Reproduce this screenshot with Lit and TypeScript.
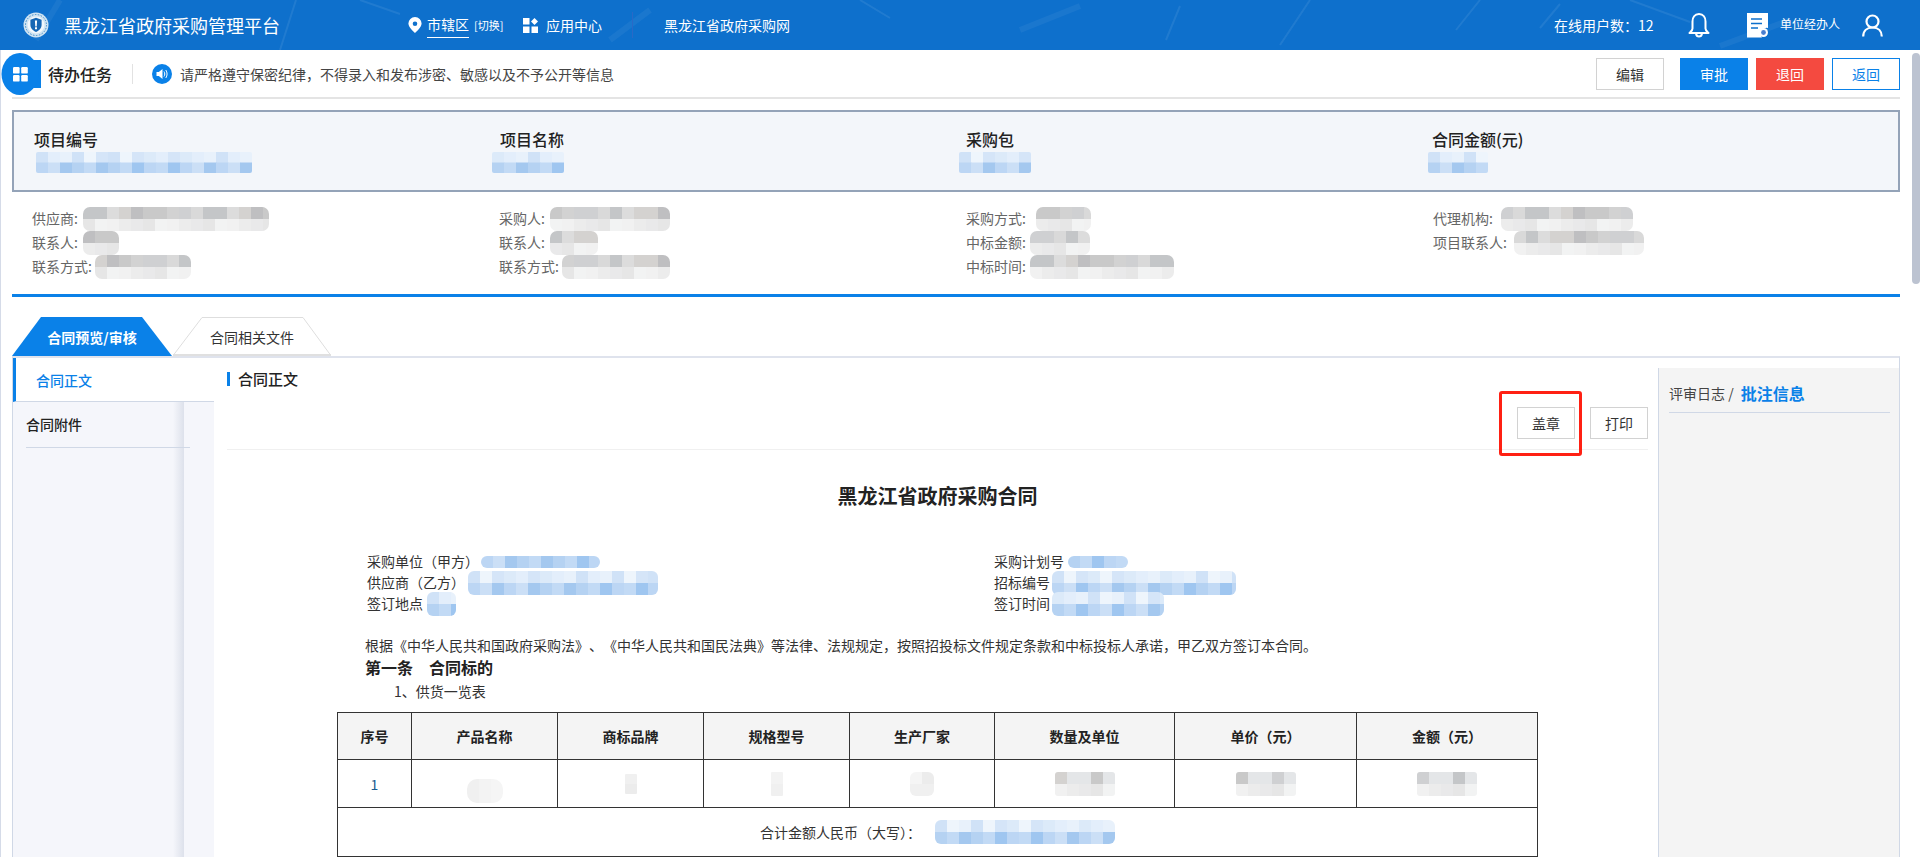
import { LitElement, html, css, svg } from "lit";
import { customElement } from "lit/decorators.js";

const GREY_D = ["#c9c9c9", "#d2d2d2", "#cfd0d2", "#d9d9d9", "#c4c6c8", "#dcdcdc", "#d4d2d0", "#bfbfc1"];
const GREY_L = ["#ececec", "#efefef", "#e6e6e6", "#f1f1f1", "#f4f4f4", "#e9e9ea", "#f2f3f3"];
const BLUE_D = ["#a4c8ef", "#b5d2f2", "#c2daf5", "#9fc6f0", "#bcd6f4", "#cbdff6"];
const BLUE_L = ["#d5e5f8", "#dceaf9", "#e3eefb", "#e8f1fb", "#d0e2f7", "#eef5fc"];
const FAINT = ["#ececec", "#f0f0f0", "#f3f3f3", "#f5f5f5"];

let seedCounter = 7;
const pick = (list: string[], n: number) => list[(n * 7 + (n % 5) * 3) % list.length];

/** Mosaic redaction patch: 12px cells, one row per 12px of height. */
function patch(w: number, h: number, rows: string[][], ml = 4, r = 5) {
  const cols = Math.ceil(w / 12);
  const rects = [];
  for (let y = 0; y < rows.length; y++) {
    for (let x = 0; x < cols; x++) {
      seedCounter += 3;
      rects.push(svg`<rect x=${x * 12} y=${y * (h / rows.length)} width="12.5" height=${h / rows.length + 0.5} fill=${pick(rows[y], seedCounter + x)} />`);
    }
  }
  return html`<svg class="patch" width=${w} height=${h} viewBox="0 0 ${w} ${h}" style="margin-left:${ml}px;border-radius:${r}px">${rects}</svg>`;
}
const grey = (w: number, ml = 4) => patch(w, 24, [GREY_D, GREY_L], ml, 7);
const blueHead = (w: number, ml = 0) => patch(w, 21, [BLUE_L, BLUE_D], ml, 2);
const blueDoc = (w: number, h: number, ml = 2) => patch(w, h, h > 12 ? [BLUE_L, BLUE_D] : [BLUE_D], ml, 6);
const cellPatch = (w: number, h: number) => patch(w, h, h > 12 ? [GREY_D.map((c, i) => (i % 2 ? "#e4e6e8" : c)), GREY_L] : [FAINT], 0, 3);

@customElement("app-root")
export class AppRoot extends LitElement {
  static styles = css`
    :host {
      display: block;
      width: 1920px;
      height: 857px;
      overflow: hidden;
      position: relative;
      background: #fff;
      color: #333;
      font-family: "Noto Sans CJK SC", "Liberation Sans", sans-serif;
      font-size: 14px;
    }
    * { box-sizing: border-box; }
    .patch { display: block; flex: none; overflow: hidden; }

    /* header */
    .header {
      position: relative;
      height: 50px;
      background: #0e70cc;
      color: #fff;
      display: flex;
      align-items: center;
      overflow: hidden;
    }
    .streaks { position: absolute; inset: 0; pointer-events: none; }
    .header > *:not(.streaks) { position: relative; flex: none; }
    .logo { margin-left: 23px; }
    .brand { margin-left: 15px; font-size: 18px; width: 216px; white-space: nowrap; }
    .pin { margin-left: 128px; }
    .region { margin-left: 5px; width: 42px; height: 24px; line-height: 20px; border-bottom: 1px solid #fff; margin-top: 1px; white-space: nowrap; }
    .switch { margin-left: 5px; font-size: 11px; width: 42px; white-space: nowrap; }
    .gridico { margin-left: 7px; }
    .apps { margin-left: 8px; width: 56px; white-space: nowrap; }
    .vsep { margin-left: 30px; width: 1px; height: 26px; background: #2a69c6; }
    .site { margin-left: 31px; width: 126px; white-space: nowrap; }
    .online { margin-left: 764px; width: 120px; white-space: nowrap; }
    .bell { margin-left: 14px; }
    .docico { margin-left: 37px; }
    .role { margin-left: 11px; font-size: 12px; width: 61px; white-space: nowrap; margin-top: -4px; }
    .user { margin-left: 21px; }

    /* page */
    .page { padding: 0 20px 0 12px; }
    .edge { position: absolute; left: 0; top: 50px; bottom: 0; width: 1px; background: #d5dbe8; }
    .scroll { position: absolute; right: 0; top: 53px; width: 8px; height: 231px; border-radius: 4px; background: #bcc3d1; }

    .toolbar {
      height: 49px;
      border-bottom: 2px solid #e4e4e4;
      display: flex;
      align-items: center;
    }
    .badge { margin-left: -11px; flex: none; }
    .tb-title { margin-left: 7px; font-size: 16px; font-weight: 500; color: #222; width: 64px; white-space: nowrap; }
    .tb-sep { margin-left: 20px; width: 1px; height: 20px; background: #e2e2e2; }
    .sound { margin-left: 19px; flex: none; }
    .notice { margin-left: 8px; color: #444; white-space: nowrap; }
    .tb-actions { margin-left: auto; display: flex; }
    .btn {
      width: 68px;
      height: 32px;
      display: grid;
      place-items: center;
      font-size: 14px;
      background: #fff;
      border: 1px solid #d2d2d2;
      color: #333;
    }
    .btn.primary { background: #0a81e8; border-color: #0a81e8; color: #fff; margin-left: 16px; }
    .btn.danger { background: #f44a40; border-color: #f44a40; color: #fff; margin-left: 8px; }
    .btn.outline { border-color: #0a81e8; color: #0a81e8; margin-left: 8px; }

    .summary {
      margin-top: 11px;
      height: 82px;
      border: 2px solid #94a3b8;
      background: #f3f6fa;
      padding: 15px 0 0 20px;
      display: grid;
      grid-template-columns: repeat(4, 466px);
    }
    .sum-label { font-size: 16px; font-weight: 500; line-height: 25px; color: #222; white-space: nowrap; }

    .info {
      margin-top: 14px;
      padding-left: 20px;
      display: grid;
      grid-template-columns: repeat(4, 467px);
    }
    .info-row { height: 24px; display: flex; align-items: center; color: #666; white-space: nowrap; }
    .info-row .patch { margin-top: 2px; }
    .rule { margin-top: 16px; height: 3px; background: #0a81e8; }

    .tabs { margin-top: 20px; height: 39px; display: flex; gap: 1px; }
    .tab { position: relative; height: 39px; display: grid; place-items: center; white-space: nowrap; }
    .tab svg { position: absolute; inset: 0; }
    .tab span { position: relative; }
    .tab.on { width: 160px; color: #fff; font-weight: 700; }
    .tab.off { width: 158px; color: #333; }

    .frame {
      height: 501px;
      overflow: hidden;
      border-top: 2px solid #dfe3ed;
      border-left: 1px solid #d0d8e6;
      border-right: 1px solid #d0d8e6;
      display: flex;
    }

    .side { width: 201px; flex: none; background: #f5f6fb; }
    .side-on {
      height: 44px;
      background: #fff;
      border-left: 3px solid #0a81e8;
      border-bottom: 1px solid #d0d8e6;
      padding-left: 20px;
      line-height: 45px;
      color: #0a81e8;
      font-weight: 500;
    }
    .side-rest {
      height: 100%;
      margin-right: 30px;
      background: linear-gradient(to right, transparent 160px, #dde1eb);
      padding-left: 13px;
    }
    .side-item { height: 46px; width: 164px; border-bottom: 1px solid #d0d8e6; line-height: 44px; font-weight: 500; color: #222; }

    .main { width: 1444px; flex: none; padding: 14px 10px 0 13px; overflow: hidden; }
    .main-title { height: 14px; line-height: 13px; font-size: 15px; border-left: 3px solid #0a81e8; padding-left: 8px; font-weight: 500; color: #222; }
    .actions { margin-top: 21px; padding-bottom: 10px; border-bottom: 1px solid #f0f0f0; display: flex; justify-content: flex-end; gap: 15px; }
    .stamp { position: relative; width: 58px; }
    .stamp::after {
      content: "";
      position: absolute;
      left: -19px;
      right: -8px;
      top: -17px;
      bottom: -18px;
      border: 3px solid #ff2013;
      border-radius: 3px;
    }
    .print { width: 58px; }

    .doc-title { margin-top: 31px; height: 30px; line-height: 30px; font-size: 20px; font-weight: 700; color: #222; text-align: center; }
    .doc-info { margin-top: 39px; margin-left: 140px; display: grid; grid-template-columns: 627px 1fr; }
    .doc-row { height: 21px; display: flex; align-items: center; white-space: nowrap; color: #333; }
    .doc-row .patch { margin-top: 2px; }
    .para { margin: 22px 0 0 138px; line-height: 21px; color: #333; white-space: nowrap; text-spacing-trim: space-all; }
    .h-clause { margin-left: 138px; height: 24px; line-height: 22px; font-size: 16px; font-weight: 700; color: #222; white-space: nowrap; }
    .list { margin: 1px 0 0 167px; line-height: 21px; color: #333; }

    table { margin: 10px 0 0 110px; width: 1200px; table-layout: fixed; border-collapse: collapse; border: 1px solid #333; }
    th, td { border: 1px solid #333; text-align: center; padding: 0; font-weight: normal; }
    th { height: 47px; background: #f4f4f4; font-weight: 700; color: #222; }
    td { height: 48px; }
    td > .patch { margin: 0 auto !important; }
    td.low { padding-top: 14px; }
    .seq { color: #1b5c8f; }
    .total { height: 49px; }
    .total-in { display: flex; align-items: center; justify-content: center; white-space: nowrap; color: #333; }

    .aside { flex: 1; min-width: 0; margin-top: 10px; background: #f4f4f4; border-left: 1px solid #d0d8e6; padding: 0 9px 0 10px; }
    .aside-head { height: 45px; padding-top: 5px; border-bottom: 1px solid #d0d8e6; display: flex; align-items: center; gap: 5px; white-space: nowrap; color: #444; }
    .aside-head b { margin-left: 2px; font-size: 16px; font-weight: 700; color: #0a81e8; }
  `;

  render() {
    return html`
      <div class="header">
        <svg class="streaks" width="1920" height="50" viewBox="0 0 1920 50" fill="none" stroke="#fff" stroke-opacity=".08">
          <path d="M360 0l40 14M296 0l-16 50M1310 0l-30 45M1480 0l-24 30M1560 4l-20 24M1630 0l60 22M1180 6l-14 34M860 0l30 18" stroke-width="2" />
          <path d="M60 0l-24 40M610 40l40-30M1020 30l60-24M1720 46l70-26" stroke-opacity=".05" stroke-width="6" />
        </svg>
        <svg class="logo" width="26" height="26" viewBox="0 0 26 26">
          <circle cx="13" cy="13" r="12.500" fill="#cfe3f2" />
          <circle cx="13" cy="13" r="10.500" fill="none" stroke="#3d8cc9" stroke-width="1" stroke-dasharray="1.500 1.500" />
          <circle cx="13" cy="13" r="8.500" fill="#f2f8fc" />
          <path d="M13 5.800l5.600 2v5c0 3.600-2.600 5.800-5.600 7.200-3-1.400-5.600-3.600-5.600-7.200v-5z" fill="#1566b4" />
          <path d="M11.900 8.400h2.200l-.4 6h-1.400zM12 15.200h2v2h-2z" fill="#fff" />
        </svg>
        <div class="brand">黑龙江省政府采购管理平台</div>
        <svg class="pin" width="14" height="16" viewBox="0 0 14 16">
          <path fill-rule="evenodd" fill="#fff" d="M7 0a6.600 6.600 0 0 1 6.600 6.600C13.600 10.800 7 16 7 16S.4 10.800.4 6.600A6.600 6.600 0 0 1 7 0zm0 4.400a2.300 2.300 0 1 0 0 4.600 2.300 2.300 0 0 0 0-4.600z" />
        </svg>
        <div class="region">市辖区</div>
        <div class="switch">[切换]</div>
        <svg class="gridico" width="15" height="15" viewBox="0 0 15 15" fill="#fff">
          <rect x="0" y="0" width="6.500" height="6.500" />
          <rect x="0" y="8.500" width="6.500" height="6.500" />
          <rect x="8.500" y="8.500" width="6.500" height="6.500" />
          <path d="M11.500 0l3.500 3.500-3.500 3.500L8 3.500z" />
        </svg>
        <div class="apps">应用中心</div>
        <div class="vsep"></div>
        <div class="site">黑龙江省政府采购网</div>
        <div class="online">在线用户数\uFF1A12</div>
        <svg class="bell" width="22" height="26" viewBox="0 0 22 26" fill="none" stroke="#fff" stroke-width="2" stroke-linejoin="round">
          <path d="M11 2C6.500 2 4.500 5.500 4.500 9.500v7c0 2-1.500 3-3 4.500h19c-1.500-1.500-3-2.500-3-4.500v-7C17.500 5.500 15.500 2 11 2z" />
          <path d="M8 21.500c.3 1.800 1.400 3 3 3s2.700-1.200 3-3" />
        </svg>
        <svg class="docico" width="22" height="25" viewBox="0 0 22 25">
          <path d="M0 0h21v15a6 6 0 0 0-6 9.500H0z" fill="#fff" />
          <path d="M4 6h11M4 10.500h11M4 15h7" stroke="#0e70cc" stroke-width="1.600" />
          <circle cx="16.500" cy="19.500" r="4.500" fill="#fff" />
          <circle cx="16.500" cy="19.500" r="2.400" fill="#4a7fd0" />
        </svg>
        <div class="role">单位经办人</div>
        <svg class="user" width="21" height="23" viewBox="0 0 21 23" fill="none" stroke="#fff" stroke-width="2.200">
          <circle cx="10.500" cy="7.500" r="6" />
          <path d="M1.200 22.500c0-5.500 3.500-9 9.300-9s9.300 3.500 9.300 9" />
        </svg>
      </div>

      <div class="edge"></div>
      <div class="scroll"></div>

      <div class="page">
        <div class="toolbar">
          <svg class="badge" width="40" height="42" viewBox="0 0 40 42">
            <rect x="20" y="7" width="20" height="28" fill="#0a81e8" />
            <ellipse cx="19" cy="21" rx="18.500" ry="21" fill="#0a81e8" />
            <rect x="12" y="14" width="6.600" height="6.600" rx="1.200" fill="#fff" />
            <rect x="20.200" y="14" width="6.600" height="6.600" rx="1.200" fill="#fff" />
            <rect x="12" y="22" width="6.600" height="6.600" rx="1.200" fill="#fff" />
            <rect x="20.200" y="22" width="6.600" height="6.600" rx="1.200" fill="#fff" />
          </svg>
          <div class="tb-title">待办任务</div>
          <div class="tb-sep"></div>
          <svg class="sound" width="20" height="20" viewBox="0 0 20 20">
            <circle cx="10" cy="10" r="10" fill="#0a81e8" />
            <path d="M4.500 8h2.300l3.700-3v10l-3.700-3H4.500z" fill="#fff" />
            <path d="M12 7.500c1 1.500 1 3.500 0 5M13.800 6c1.700 2.500 1.700 5.500 0 8" fill="none" stroke="#fff" stroke-width="1" />
          </svg>
          <div class="notice">请严格遵守保密纪律\uFF0C不得录入和发布涉密、敏感以及不予公开等信息</div>
          <div class="tb-actions">
            <div class="btn">编辑</div>
            <div class="btn primary">审批</div>
            <div class="btn danger">退回</div>
            <div class="btn outline">返回</div>
          </div>
        </div>

        <div class="summary">
          <div><div class="sum-label">项目编号</div>${blueHead(216, 2)}</div>
          <div><div class="sum-label">项目名称</div>${blueHead(72, -8)}</div>
          <div><div class="sum-label">采购包</div>${blueHead(72, -7)}</div>
          <div><div class="sum-label">合同金额(元)</div>${blueHead(60, -4)}</div>
        </div>

        <div class="info">
          <div>
            <div class="info-row">供应商:${grey(186, 5)}</div>
            <div class="info-row">联系人:${grey(36, 5)}</div>
            <div class="info-row">联系方式:${grey(96, 3)}</div>
          </div>
          <div>
            <div class="info-row">采购人:${grey(120, 5)}</div>
            <div class="info-row">联系人:${grey(48, 5)}</div>
            <div class="info-row">联系方式:${grey(108, 3)}</div>
          </div>
          <div>
            <div class="info-row">采购方式:${grey(55, 10)}</div>
            <div class="info-row">中标金额:${grey(60, 4)}</div>
            <div class="info-row">中标时间:${grey(144, 4)}</div>
          </div>
          <div>
            <div class="info-row">代理机构:${grey(132, 8)}</div>
            <div class="info-row">项目联系人:${grey(130, 7)}</div>
          </div>
        </div>

        <div class="rule"></div>

        <div class="tabs">
          <div class="tab on">
            <svg width="160" height="39" viewBox="0 0 160 39"><path d="M0 39L29 0h101l30 39z" fill="#0a81e8" /></svg>
            <span>合同预览/审核</span>
          </div>
          <div class="tab off">
            <svg width="158" height="39" viewBox="0 0 158 39" fill="#fff">
              <path d="M.5 38L29 .5h101L157.500 38z" stroke="#dedede" />
              <path d="M0 38h158" stroke="#e0e0e0" stroke-width="2" />
            </svg>
            <span>合同相关文件</span>
          </div>
        </div>

        <div class="frame">
          <div class="side">
            <div class="side-on">合同正文</div>
            <div class="side-rest">
              <div class="side-item">合同附件</div>
            </div>
          </div>

          <div class="main">
            <div class="main-title">合同正文</div>
            <div class="actions">
              <div class="btn stamp">盖章</div>
              <div class="btn print">打印</div>
            </div>
            <div class="doc-title">黑龙江省政府采购合同</div>
            <div class="doc-info">
              <div>
                <div class="doc-row">采购单位\uFF08甲方\uFF09${blueDoc(119, 12, 2)}</div>
                <div class="doc-row">供应商\uFF08乙方\uFF09${blueDoc(190, 24, 3)}</div>
                <div class="doc-row">签订地点${blueDoc(29, 24, 4)}</div>
              </div>
              <div>
                <div class="doc-row">采购计划号${blueDoc(60, 12, 4)}</div>
                <div class="doc-row">招标编号${blueDoc(184, 24, 2)}</div>
                <div class="doc-row">签订时间${blueDoc(112, 24, 2)}</div>
              </div>
            </div>
            <div class="para">根据《中华人民共和国政府采购法》、《中华人民共和国民法典》等法律、法规规定\uFF0C按照招投标文件规定条款和中标投标人承诺\uFF0C甲乙双方签订本合同。</div>
            <div class="h-clause">第一条\u3000合同标的</div>
            <div class="list">1、供货一览表</div>
            <table>
              <colgroup>
                <col style="width:74px" /><col style="width:146px" /><col style="width:146px" /><col style="width:146px" />
                <col style="width:145px" /><col style="width:180px" /><col style="width:182px" /><col style="width:181px" />
              </colgroup>
              <tr>
                <th>序号</th><th>产品名称</th><th>商标品牌</th><th>规格型号</th>
                <th>生产厂家</th><th>数量及单位</th><th>单价\uFF08元\uFF09</th><th>金额\uFF08元\uFF09</th>
              </tr>
              <tr>
                <td class="seq">1</td>
                <td class="low">${patch(36, 24, [FAINT, FAINT], 0, 10)}</td>
                <td>${patch(12, 20, [FAINT, FAINT], 0, 1)}</td>
                <td>${patch(12, 24, [FAINT, FAINT], 0, 1)}</td>
                <td>${patch(24, 24, [FAINT, FAINT], 0, 6)}</td>
                <td>${cellPatch(60, 24)}</td>
                <td>${cellPatch(60, 24)}</td>
                <td>${cellPatch(60, 24)}</td>
              </tr>
              <tr>
                <td class="total" colspan="8">
                  <div class="total-in">合计金额人民币\uFF08大写\uFF09\uFF1A${blueDoc(180, 24, 14)}</div>
                </td>
              </tr>
            </table>
          </div>

          <div class="aside">
            <div class="aside-head">评审日志 / <b>批注信息</b></div>
          </div>
        </div>
      </div>
    `;
  }
}
